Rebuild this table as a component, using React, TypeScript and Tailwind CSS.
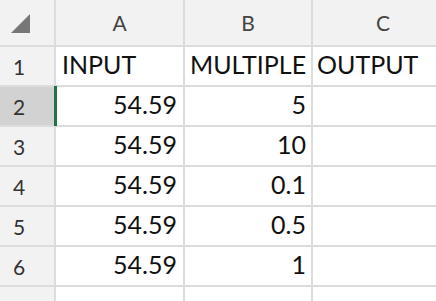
import { Fragment } from 'react';

const rows = [
  { n: '1', a: 'INPUT', b: 'MULTIPLE', c: 'OUTPUT', text: true },
  { n: '2', a: '54.59', b: '5', c: '' },
  { n: '3', a: '54.59', b: '10', c: '' },
  { n: '4', a: '54.59', b: '0.1', c: '' },
  { n: '5', a: '54.59', b: '0.5', c: '' },
  { n: '6', a: '54.59', b: '1', c: '' },
  { n: '7', a: '', b: '', c: '', hidden: true },
];

export default function App() {
  return (
    <div
      className="w-[436px] h-[301px] overflow-hidden bg-white"
      style={{ fontFamily: 'Lato, "Liberation Sans", sans-serif' }}
    >
      <div className="grid grid-cols-[54px_127px_126px_140px] grid-rows-[45px_repeat(6,38px)_20px] gap-[2px] bg-[#dcdcdc]">
        {/* Corner + column headers */}
        <div className="bg-[#f2f2f2] flex items-end">
          <svg width="54" height="45" viewBox="0 0 54 45">
            <polygon points="11,33 30,14 30,33" fill="#777777" />
          </svg>
        </div>
        {['A', 'B', 'C'].map((l) => (
          <div
            key={l}
            className="bg-[#f2f2f2] flex items-end justify-center pb-[12px] text-[21px] leading-none text-[#444]"
          >
            {l}
          </div>
        ))}

        {rows.map((r) => (
          <Fragment key={r.n}>
            <div
              className={`${r.n === '2' ? 'bg-[#d2d2d2]' : 'bg-[#f2f2f2]'} flex items-end pl-[13px] pb-[8px] text-[21px] leading-none text-[#333]`}
            >
              {r.hidden ? '' : r.n}
            </div>
            <div
              className={`relative bg-white flex items-end pb-[8px] text-[25px] leading-none text-[#111] ${
                r.text ? 'justify-start pl-[6px]' : 'justify-end pr-[6px]'
              }`}
            >
              {r.n === '2' && (
                <div className="absolute left-[-2px] top-[-1px] bottom-[-1px] w-[3px] bg-[#217346]" />
              )}
              {r.a}
            </div>
            <div
              className={`bg-white flex items-end pb-[8px] text-[25px] leading-none text-[#111] ${
                r.text ? 'justify-start pl-[5px]' : 'justify-end pr-[5px]'
              }`}
            >
              {r.b}
            </div>
            <div className="bg-white flex items-end pb-[8px] pl-[4px] text-[25px] leading-none text-[#111]">
              {r.c}
            </div>
          </Fragment>
        ))}
      </div>
    </div>
  );
}
